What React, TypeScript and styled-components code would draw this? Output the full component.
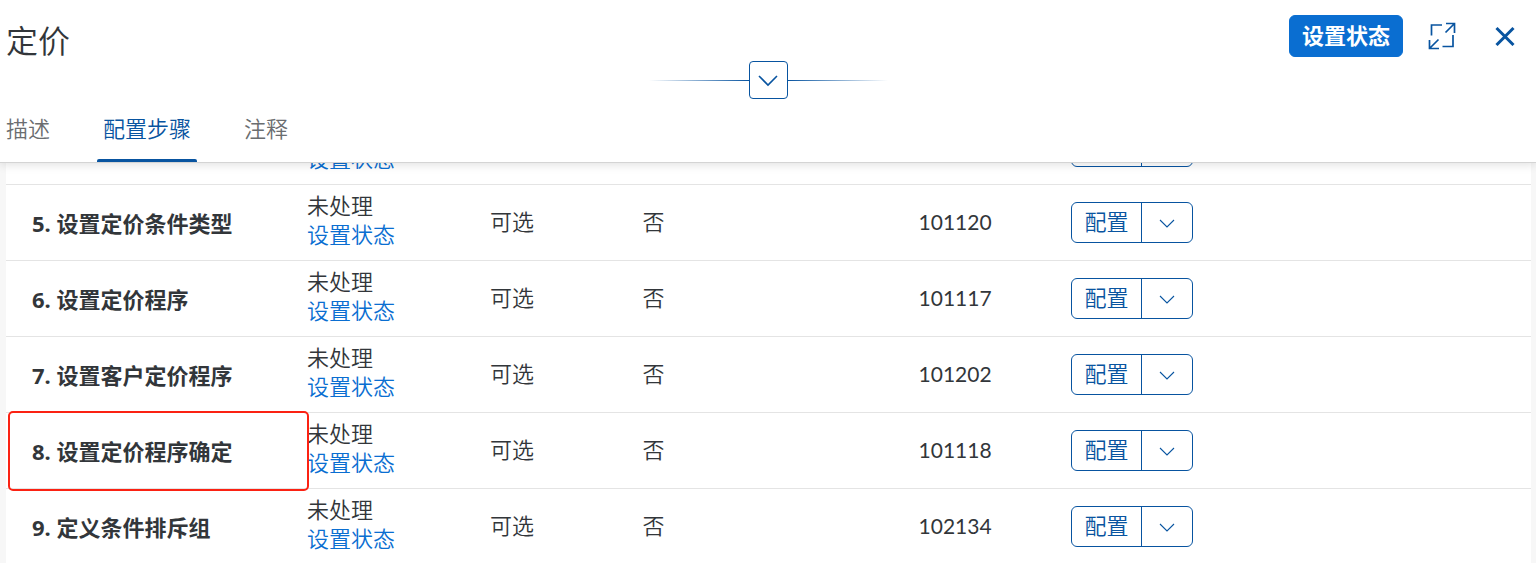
import React from "react";
import styled, { createGlobalStyle, css } from "styled-components";

const blue = "#0854a0";
const brand = "#0a6ed1";
const ink = "#32363a";

const GlobalStyle = createGlobalStyle`
  * { box-sizing: border-box; }
  body {
    margin: 0;
    background: #fff;
    color: ${ink};
    font: 350 22px/29px "Noto Sans CJK SC", "Noto Sans", sans-serif;
  }
  button { font: inherit; cursor: pointer; }
`;

const Page = styled.div`
  display: flex;
  flex-direction: column;
  height: 100vh;
  overflow: hidden;
`;

const Header = styled.header`
  position: relative;
  z-index: 1;
  background: #fff;
  border-bottom: 1px solid #d4d4d4;
  box-shadow: 0 1px 10px rgba(0, 0, 0, 0.14);
`;

const TitleBar = styled.div`
  display: flex;
  align-items: flex-start;
  justify-content: space-between;
  height: 61px;
  padding: 15px 11px 0 6px;
`;

const Title = styled.h1`
  margin: 0;
  font-size: 32px;
  font-weight: 350;
  line-height: 48px;
`;

const Actions = styled.div`
  display: flex;
  align-items: center;
`;

const PrimaryButton = styled.button`
  height: 42px;
  padding: 0 12px 4px;
  border: 1px solid ${brand};
  border-radius: 6px;
  background: ${brand};
  color: #fff;
  font-weight: 700;
  line-height: 36px;
`;

const IconButton = styled.button<{ $gap: number }>`
  display: flex;
  align-items: center;
  justify-content: center;
  width: 40px;
  height: 42px;
  margin-left: ${(p) => p.$gap}px;
  padding: 0;
  border: 0;
  background: none;
  color: ${blue};
`;

const Divider = styled.div`
  display: flex;
  align-items: center;
  justify-content: center;
`;

const Ray = styled.span<{ $to: "left" | "right" }>`
  width: 100px;
  height: 1px;
  background: linear-gradient(to ${(p) => p.$to}, ${blue}, transparent);
`;

const ExpandButton = styled.button`
  display: flex;
  align-items: center;
  justify-content: center;
  width: 39px;
  height: 38px;
  padding: 2px 0 0;
  border: 1px solid ${blue};
  border-radius: 4px;
  background: #fff;
  color: ${blue};
`;

const Tabs = styled.div`
  display: flex;
  gap: 41px;
`;

const Tab = styled.button<{ $active?: boolean }>`
  display: flex;
  flex-direction: column;
  justify-content: space-between;
  height: 63px;
  padding: 0 6px;
  border: 0;
  background: none;
  color: ${(p) => (p.$active ? blue : "#6a6d70")};
  line-height: 57px;

  &::after {
    content: "";
    align-self: stretch;
    height: 3px;
    margin: 0 -6px;
    border-radius: 2px 2px 0 0;
    background: ${(p) => (p.$active ? blue : "transparent")};
  }
`;

const Body = styled.main`
  flex: 1;
  min-height: 0;
  overflow: hidden;
  padding: 0 5px 0 6px;
  background: #f7f7f7;
`;

const Table = styled.table`
  width: 100%;
  margin-top: -54px;
  table-layout: fixed;
  border-collapse: separate;
  border-spacing: 0;
  background: #fff;
`;

const Col = styled.col<{ $w: string }>`
  width: ${(p) => p.$w};
`;

const cell = css`
  height: 76px;
  padding: 0;
  border-bottom: 1px solid #e4e4e4;
  text-align: left;
  vertical-align: middle;
`;

const ActionCell = styled.td`
  ${cell}
`;

const Cell = styled.td`
  ${cell}
  padding-bottom: 4px;
`;

const IdCell = styled.td`
  ${cell}
  padding-bottom: 2px;
  font-family: Lato, sans-serif;
  font-size: 21px;
  font-weight: 400;
`;

const NameCell = styled.th<{ $marked?: boolean }>`
  ${cell}
  position: relative;
  padding: 2px 0 0 26px;
  font-family: "Noto Sans", "Noto Sans CJK SC", sans-serif;
  font-weight: 700;

  ${(p) =>
    p.$marked &&
    css`
      &::after {
        content: "";
        position: absolute;
        inset: -2px -2px -3px 2px;
        border: 2px solid #fb2213;
        border-radius: 5px;
      }
    `}
`;

const Status = styled.div`
  display: flex;
  flex-direction: column;
  align-items: flex-start;
  padding-bottom: 4px;
`;

const StatusLink = styled.a`
  color: ${brand};
  text-decoration: none;
`;

const SplitButton = styled.div`
  display: inline-flex;
  height: 41px;
  border: 1px solid ${blue};
  border-radius: 6px;
  vertical-align: middle;
`;

const SplitPart = styled.button<{ $width: number }>`
  display: flex;
  align-items: center;
  justify-content: center;
  width: ${(p) => p.$width}px;
  padding: 0 0 4px;
  border: 0;
  background: none;
  color: ${blue};

  & + & {
    padding: 2px 0 0;
    border-left: 1px solid ${blue};
  }
`;

const Chevron = ({ width, stroke }: { width: number; stroke: number }) => (
  <svg width={width} height={width / 2 + 2} viewBox={`0 0 ${width} ${width / 2 + 2}`} fill="none" stroke="currentColor" strokeWidth={stroke} aria-hidden="true">
    <path d={`M1 1L${width / 2} ${width / 2}L${width - 1} 1`} />
  </svg>
);

const FullScreenIcon = () => (
  <svg width="28" height="28" viewBox="0 0 28 28" fill="none" stroke="currentColor" strokeWidth="1.7" aria-hidden="true">
    <path d="M3.5 13.5V3H14M25 13V24.5H14.5" />
    <path d="M18 1.5H26.5V11M26 2L17.5 10.500M1.500 18V26.500H11M2 26L10.500 17.500" />
  </svg>
);

const CloseIcon = () => (
  <svg width="20" height="20" viewBox="0 0 20 20" fill="none" stroke="currentColor" strokeWidth="3" aria-hidden="true">
    <path d="M1.500 2L18.500 19M18.500 2L1.500 19" />
  </svg>
);

type Step = { name?: string; id?: string; marked?: boolean };

const steps: Step[] = [
  {},
  { name: "5. 设置定价条件类型", id: "101120" },
  { name: "6. 设置定价程序", id: "101117" },
  { name: "7. 设置客户定价程序", id: "101202" },
  { name: "8. 设置定价程序确定", id: "101118", marked: true },
  { name: "9. 定义条件排斥组", id: "102134" },
];

const StepRow = ({ name, id, marked }: Step) => (
  <tr>
    <NameCell scope="row" $marked={marked}>{name}</NameCell>
    <Cell>
      <Status>
        <span>{id && "未处理"}&nbsp;</span>
        <StatusLink href="#status">设置状态</StatusLink>
      </Status>
    </Cell>
    <Cell>{id && "可选"}</Cell>
    <Cell>{id && "否"}</Cell>
    <IdCell>{id}</IdCell>
    <ActionCell>
      <SplitButton>
        <SplitPart type="button" $width={69} aria-label="配置">{id && "配置"}</SplitPart>
        <SplitPart type="button" $width={51} aria-label="更多">
          <Chevron width={16} stroke={1.1} />
        </SplitPart>
      </SplitButton>
    </ActionCell>
  </tr>
);

export default function App() {
  return (
    <Page>
      <GlobalStyle />
      <Header>
        <TitleBar>
          <Title>定价</Title>
          <Actions>
            <PrimaryButton type="button">设置状态</PrimaryButton>
            <IconButton type="button" $gap={19} aria-label="全屏">
              <FullScreenIcon />
            </IconButton>
            <IconButton type="button" $gap={23} aria-label="关闭">
              <CloseIcon />
            </IconButton>
          </Actions>
        </TitleBar>
        <Divider>
          <Ray $to="left" />
          <ExpandButton type="button" aria-label="展开标题">
            <Chevron width={20} stroke={1.6} />
          </ExpandButton>
          <Ray $to="right" />
        </Divider>
        <Tabs role="tablist">
          <Tab type="button" role="tab" aria-selected={false}>描述</Tab>
          <Tab type="button" role="tab" aria-selected $active>配置步骤</Tab>
          <Tab type="button" role="tab" aria-selected={false}>注释</Tab>
        </Tabs>
      </Header>
      <Body>
        <Table>
          <colgroup>
            <Col $w="301px" />
            <Col $w="12%" />
            <Col $w="10%" />
            <Col $w="18.1%" />
            <Col $w="10%" />
            <Col $w="auto" />
          </colgroup>
          <tbody>
            {steps.map((step, i) => (
              <StepRow key={i} {...step} />
            ))}
          </tbody>
        </Table>
      </Body>
    </Page>
  );
}
